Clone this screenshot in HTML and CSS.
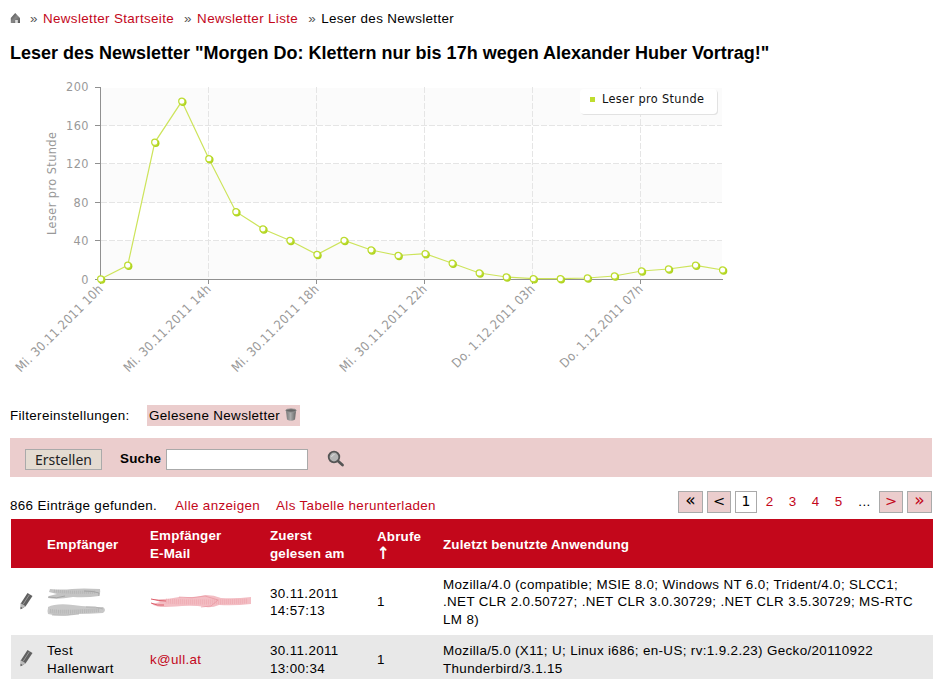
FILE: index.html
```html
<!DOCTYPE html>
<html lang="de">
<head>
<meta charset="utf-8">
<title>Leser des Newsletter</title>
<link rel="stylesheet" href="styles.css">
</head>
<body>
<nav class="crumbs">
  <svg class="home" width="11" height="11" viewBox="0 0 11 11"><defs><linearGradient id="g" x1="0" x2="1" y1="0" y2="1"><stop offset="0" stop-color="#444"/><stop offset=".5" stop-color="#888"/><stop offset="1" stop-color="#555"/></linearGradient></defs><path d="M5.200 0 10 5V10H7.500V7H5.500V10H.8V5z" fill="url(#g)"/><path d="M5.500 7h2v3h-2z" fill="#ddd"/></svg>
  <span class="sep sep1">»</span><a class="c1">Newsletter Startseite</a>
  <span class="sep sep2">»</span><a class="c2">Newsletter Liste</a>
  <span class="sep sep3">»</span><span>Leser des Newsletter</span>
</nav>
<h1>Leser des Newsletter "Morgen Do: Klettern nur bis 17h wegen Alexander Huber Vortrag!"</h1>
<svg class="chart" width="740" height="310" viewBox="0 70 740 310">
  <g fill="#fbfbfb"><path d="M101 88h621v37.5H101zM101 164h621v38.5H101zM101 241h621v38H101z"/></g>
  <g class="grid">
    <path d="M101 125.5H722M101 163.5H722M101 202.5H722M101 240.5H722"/>
    <path d="M208.5 87V279M316.5 87V279M424.5 87V279M532.5 87V279M640.5 87V279"/>
  </g>
  <path class="axis" d="M100.5 87V284M95 87.5h6M95 125.5h6M95 163.5h6M95 202.5h6M95 240.5h6M95 279.5H723M208.5 279v5M316.5 279v5M424.5 279v5M532.5 279v5M640.5 279v5"/>
  <g class="lbl" text-anchor="end">
    <text x="88.5" y="91" textLength="22.5">200</text><text x="88.5" y="130" textLength="22.5">160</text><text x="88.5" y="168" textLength="22.5">120</text><text x="88.5" y="207" textLength="15">80</text><text x="88.5" y="245" textLength="15">40</text><text x="88.5" y="284">0</text>
    <text transform="translate(103.500 290) rotate(-45)" textLength="117">Mi. 30.11.2011 10h</text>
    <text transform="translate(211.500 290) rotate(-45)" textLength="117">Mi. 30.11.2011 14h</text>
    <text transform="translate(319.500 290) rotate(-45)" textLength="117">Mi. 30.11.2011 18h</text>
    <text transform="translate(427.500 290) rotate(-45)" textLength="117">Mi. 30.11.2011 22h</text>
    <text transform="translate(535.500 290) rotate(-45)" textLength="111">Do. 1.12.2011 03h</text>
    <text transform="translate(643.500 290) rotate(-45)" textLength="111">Do. 1.12.2011 07h</text>
  </g>
  <text class="lbl" transform="translate(56 235) rotate(-90)" textLength="103">Leser pro Stunde</text>
  <rect x="581" y="90" width="137" height="25" rx="4" fill="#e2e2e2"/>
  <rect x="580" y="89" width="137" height="25" rx="4" fill="#fff"/>
  <rect x="590" y="97" width="5" height="5" fill="#bfdd2f"/>
  <text class="leg" x="602" y="103" textLength="102">Leser pro Stunde</text>
  <polyline class="line" id="line"/>
  <g id="dots"></g>
</svg>
<div class="filter"><span class="flabel">Filtereinstellungen:</span><span class="tag"><span>Gelesene Newsletter</span><svg width="12" height="14" viewBox="0 0 12 14"><defs><linearGradient id="b"><stop offset="0" stop-color="#777"/><stop offset=".45" stop-color="#aaa"/><stop offset="1" stop-color="#666"/></linearGradient></defs><path d="M1 3h10l-1 8.500Q6 14 2 11.500z" fill="url(#b)"/><ellipse cx="6" cy="2.500" rx="5.300" ry="1.700" fill="#666" stroke="#999" stroke-width=".8"/></svg></span></div>
<form class="search">
  <button type="button">Erstellen</button><label>Suche</label><input type="text">
  <svg width="18" height="18" viewBox="0 0 18 18"><path d="m11 11 4.500 4" stroke="#555" stroke-width="2.800" stroke-linecap="round"/><circle cx="7" cy="7" r="5.300" fill="#b4b4b4" stroke="#555" stroke-width="1.800"/><path d="M4.500 7Q5 4.500 7.500 4.500" stroke="#ddd" fill="none"/></svg>
</form>
<div class="results">
  <span class="count">866 Einträge gefunden.</span><a class="all">Alle anzeigen</a><a class="dl">Als Tabelle herunterladen</a>
  <div class="pager"><span class="box w25 dbl">«</span><span class="box w24">&lt;</span><span class="box cur">1</span><a>2</a><a>3</a><a>4</a><a>5</a><span class="dots">...</span><span class="box w24 red">&gt;</span><span class="box w25 dbl red">»</span></div>
</div>
<table>
  <colgroup><col class="k1"><col class="k2"><col class="k3"><col class="k4"><col class="k5"><col></colgroup>
  <tr class="head"><th></th><th>Empfänger</th><th>Empfänger<br>E-Mail</th><th>Zuerst<br>gelesen am</th><th>Abrufe<br><span class="arrow">↑</span></th><th>Zuletzt benutzte Anwendung</th></tr>
  <tr class="r1">
    <td><svg class="pen" width="16" height="18" viewBox="0 0 16 18"><path d="m8.500 1 5 3-6.800 10.200-5 3 .2-6z" fill="#606060"/><path d="M10.500 2.500 4 12.500" stroke="#999"/><path d="m1.700 11.200 5 3-5 3z" fill="#bbb"/><path d="m1.600 14.800 2 1.200-2 1.200z" fill="#555"/></svg></td>
    <td><svg class="smear" width="60" height="32" viewBox="47 586 60 32"><g transform="translate(0 1)"><path d="M50 588q12 1 22 0t28 0q1 3-1 7-13 2-26 1-16 3-25 1l1-2 8-2-8-2z" fill="#c4c4c4"/><path d="M48 596q9 2 17-1M84 590q10 0 15 2v3" stroke="#999" fill="none" opacity=".75"/><path d="M54 590q20 2 42 1" stroke="#aaa" stroke-width="3" stroke-dasharray="1 1" fill="none" opacity=".5"/><path d="M48 606q8-4 25-2t30 2q4 3 0 6-14 1-27 1-15 3-28 0-1-3 0-6z" fill="#c8c8c8"/><path d="M50 610q15 2 50-1" stroke="#a5a5a5" stroke-width="4" stroke-dasharray="1 1" fill="none" opacity=".5"/><path d="M52 614q15 1 27-1M86 606q10-1 17 2" stroke="#aaa" fill="none" opacity=".7"/></g></svg></td>
    <td><svg class="smear" width="104" height="16" viewBox="149 595 104 16"><g transform="translate(0 1)"><path d="M152 599q12 1 26-2 15 1 27-2 8 0 15 3 14 1 30-1v7q-17 2-32 1-7 3-13 2-13-2-24-1-13 1-21 1-7-1-9-3l8-2z" fill="#f3bec4"/><path d="M165 601q20 2 82 0" stroke="#ea98a2" stroke-width="5" stroke-dasharray="1 1" fill="none" opacity=".45"/><path d="M178 597q13 2 26-1l13 4-7 6-10 1" stroke="#e88e99" fill="none" opacity=".6"/><path d="M150 599q8 2 15 2M150 603q6 3 13 2" stroke="#dc5c69" fill="none"/></g></svg></td>
    <td>30.11.2011<br>14:57:13</td><td>1</td><td>Mozilla/4.0 (compatible; MSIE 8.0; Windows NT 6.0; Trident/4.0; SLCC1;<br>.NET CLR 2.0.50727; .NET CLR 3.0.30729; .NET CLR 3.5.30729; MS-RTC<br>LM 8)</td></tr>
  <tr class="r2">
    <td><svg class="pen" width="16" height="18" viewBox="0 0 16 18"><path d="m8.500 1 5 3-6.800 10.200-5 3 .2-6z" fill="#606060"/><path d="M10.500 2.500 4 12.500" stroke="#999"/><path d="m1.700 11.200 5 3-5 3z" fill="#bbb"/><path d="m1.600 14.800 2 1.200-2 1.200z" fill="#555"/></svg></td>
    <td>Test<br>Hallenwart</td><td><a>k@ull.at</a></td><td>30.11.2011<br>13:00:34</td><td>1</td><td>Mozilla/5.0 (X11; U; Linux i686; en-US; rv:1.9.2.23) Gecko/20110922<br>Thunderbird/3.1.15</td></tr>
</table>
<script src="chart.js"></script>
</body>
</html>
```
FILE: styles.css
```css
* { box-sizing: border-box; }
body { margin: 0; height: 679px; overflow: hidden; background: #fff; color: #000; font: 13.4px/17px "Liberation Sans", Arial, sans-serif; letter-spacing: .36px; }
svg { display: block; flex: none; }
a, .red { color: #c3071b; }
.crumbs { display: flex; align-items: center; height: 37px; padding-left: 10px; white-space: nowrap; }
.sep { color: #555; width: 13px; letter-spacing: 0; }
.sep1 { margin-left: 9px; }
.sep2, .sep3 { margin-left: 10px; }
h1 { margin: 0; height: 33px; padding: 4px 0 0 10px; font-size: 18px; line-height: 24px; letter-spacing: 0; white-space: nowrap; }
.chart text { font: 12.6px "DejaVu Sans Condensed", "DejaVu Sans", sans-serif; font-stretch: condensed; letter-spacing: 0; }
.chart .lbl, .chart .lbl text { fill: #999; }
.leg { fill: #111; }
.grid { stroke: #e5e5e5; stroke-dasharray: 6 2; fill: none; }
.axis { stroke: #909090; fill: none; }
.line { fill: none; stroke: #cde45b; stroke-width: 1.2; }
.dotshade { fill: #aed31f; }
.dot { fill: #fff; stroke: #bddc30; stroke-width: 1.2; }
.filter { display: flex; height: 58px; padding: 25px 0 0 10px; line-height: 21px; white-space: nowrap; }
.flabel { width: 137px; }
.tag { display: flex; width: 153px; height: 21px; padding-left: 2px; background: #ebcdcd; }
.tag span { width: 132px; }
.tag svg { margin: 3px 0 0 4px; }
.search { display: flex; align-items: flex-start; margin: 0 10px; height: 39px; background: #ebcdcd; padding: 11px 0 0 15px; }
.search button { width: 77px; height: 21px; padding: 0; border: 1px solid #aaa; background: #e4dbd1; font: 14px/18px "Noto Sans", sans-serif; color: #222; }
.search label { margin: 1px 0 0 18px; width: 46px; font-weight: bold; letter-spacing: .2px; }
.search input { width: 142px; height: 21px; border: 1px solid #aaa; background: #fff; padding: 0; }
.search svg { margin: 1px 0 0 19px; }
.results { display: flex; height: 42px; padding: 14px 10px 0; white-space: nowrap; }
.results > span, .results > a { padding-top: 6px; }
.count { width: 165px; }
.all { width: 101px; }
.pager { display: flex; margin-left: auto; line-height: 22px; text-align: center; letter-spacing: 0; }
.pager a { width: 23px; }
.dots { width: 29px; letter-spacing: .5px; }
.box { height: 22px; border: 1px solid #aaa; background: #ebcdcd; font: 14.5px/19px "DejaVu Sans", sans-serif; margin-right: 4px; }
.dbl { font-size: 17px; line-height: 17px; }
.box:last-child { margin-right: 0; }
.w25 { width: 25px; }
.w24 { width: 24px; }
.box.cur { width: 22px; margin-right: 1px; background: #fff; font-size: 14px; line-height: 19px; }
table { table-layout: fixed; width: 922px; margin-left: 11px; border-collapse: collapse; line-height: 17.5px; }
.k1 { width: 36px; } .k2 { width: 103px; } .k3 { width: 120px; } .k4 { width: 107px; } .k5 { width: 66px; }
th, td { padding: 0; text-align: left; vertical-align: middle; white-space: nowrap; }
th { color: #fff; letter-spacing: .17px; }
.head { height: 49px; background: #c3071b; }
.head th { padding-top: 2px; }
.arrow { display: block; font: bold 17px/16px "DejaVu Sans Condensed", sans-serif; }
.r1 { height: 67px; }
.r1 td { padding-top: 1px; }
.r2 { height: 49px; background: #e8e8e8; }
.pen { margin: -3px 0 0 8px; }
.smear { filter: blur(.5px); }
```
FILE: chart.js
```js
const ys = [279, 265.3, 142.3, 101.3, 158.7, 211.7, 229, 240.5, 254.5, 240.5, 250, 255.5, 253.7, 263.3, 273, 277, 278.7, 278.7, 278, 276, 271, 269, 265.3, 270];
const pts = ys.map((y, i) => [100.7 + i * 27.04, y]);
document.getElementById("line").setAttribute("points", pts.map(p => p.join(",")).join(" "));
const add = (cls, x, y, r) => {
  const c = document.createElementNS("http://www.w3.org/2000/svg", "circle");
  c.setAttribute("class", cls);
  c.setAttribute("cx", x);
  c.setAttribute("cy", y);
  c.setAttribute("r", r);
  document.getElementById("dots").appendChild(c);
};
for (const [x, y] of pts) {
  add("dotshade", x + 1, y + 1, 3.7);
  add("dot", x, y, 3.1);
}
```
